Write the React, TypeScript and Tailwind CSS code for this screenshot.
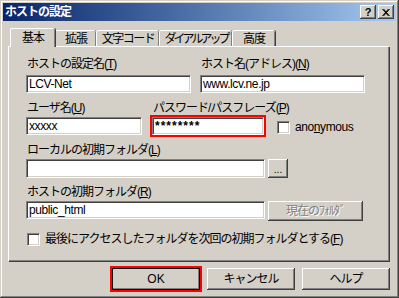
import { useState } from 'react';

const raised =
  'bg-[#d4d0c8] shadow-[inset_-1px_-1px_0_#404040,inset_1px_1px_0_#ffffff,inset_-2px_-2px_0_#808080,inset_2px_2px_0_#d4d0c8]';
const sunken =
  'bg-white border border-t-[#808080] border-l-[#808080] border-b-white border-r-white shadow-[inset_1px_1px_0_#404040,inset_-1px_-1px_0_#d4d0c8]';

function Label({ text, k }: { text: string; k: string }) {
  return (
    <div className="h-[14px] leading-[14px] pl-px whitespace-nowrap text-black">
      {text}(<u>{k}</u>)
    </div>
  );
}

function Field({ value, className, tr = 'tracking-[-0.4px]' }: { value: string; className: string; tr?: string }) {
  return (
    <div className={`${sunken} ${className} ${tr} flex items-center pl-[2px] overflow-hidden whitespace-nowrap`}>
      {value}
    </div>
  );
}

function Check({ checked }: { checked: boolean }) {
  return (
    <div className={`${sunken} w-[13px] h-[13px] shrink-0 flex items-center justify-center`}>
      {checked && (
        <svg width="7" height="7" viewBox="0 0 7 7">
          <path d="M0 2 L2 4 L6 0 M0 3 L2 5 L6 1 M0 4 L2 6 L6 2" stroke="#000" fill="none" />
        </svg>
      )}
    </div>
  );
}

const tabs = [
  { name: '基本', w: 'w-[45px]', tr: 'tracking-[-1px]' },
  { name: '拡張', w: 'w-[41px]', tr: 'tracking-[-1px]' },
  { name: '文字コード', w: 'w-[63px]', tr: 'tracking-[-1.5px]' },
  { name: 'ダイアルアップ', w: 'w-[73px]', tr: 'tracking-[-3px]' },
  { name: '高度', w: 'w-[43px]', tr: 'tracking-[-1px]' },
];

export default function App() {
  const [tab, setTab] = useState(0);
  const [anon, setAnon] = useState(false);
  const [last, setLast] = useState(false);

  return (
    <div className="w-[399px] h-[298px] bg-[#d4d0c8] p-[3px] overflow-hidden text-[12px] tracking-[-1px] text-black font-['Liberation_Sans','Noto_Sans_CJK_JP',sans-serif] shadow-[inset_-1px_-1px_0_#404040,inset_1px_1px_0_#d4d0c8,inset_-2px_-2px_0_#808080,inset_2px_2px_0_#ffffff]">
      {/* title bar */}
      <div className="h-[18px] flex items-center justify-between pl-[2px] pr-[2px] bg-gradient-to-r from-[#0a246a] to-[#a6caf0]">
        <span className="text-white font-bold text-[12px] leading-[14px]">ホストの設定</span>
        <div className="flex items-center">
          <div className={`${raised} w-[16px] h-[14px] flex items-center justify-center text-[11px] font-bold leading-none tracking-normal`}>?</div>
          <div className={`${raised} w-[16px] h-[14px] ml-[2px] flex items-center justify-center`}>
            <svg width="8" height="7" viewBox="0 0 8 7">
              <path d="M0.5 0 L6.5 7 M1.5 0 L7.5 7 M6.5 0 L0.5 7 M7.5 0 L1.5 7" stroke="#000" strokeWidth="1" />
            </svg>
          </div>
        </div>
      </div>

      {/* tabs */}
      <div className="flex items-end h-[18px] mt-[7px] pl-[7px]">
        {tabs.map((t, i) => (
          <button
            key={t.name}
            onClick={() => setTab(i)}
            className={`${t.w} ${t.tr} ${
              i === tab ? 'h-[19px] -mb-px relative z-10' : 'h-[16px]'
            } bg-[#d4d0c8] rounded-t-[2px] border-t border-l border-t-white border-l-white shadow-[inset_-1px_0_0_#808080,1px_0_0_#404040] flex items-center justify-center leading-[14px] whitespace-nowrap`}
          >
            {t.name}
          </button>
        ))}
      </div>

      {/* panel */}
      <div className="ml-[5px] w-[381px] h-[215px] border-t border-l border-t-white border-l-white shadow-[inset_-1px_-1px_0_#808080,1px_1px_0_#404040] pl-[17px] pt-[10px]">
        {/* row 1 */}
        <div className="flex gap-[9px]">
          <div className="w-[165px]">
            <Label text="ホストの設定名" k="T" />
            <Field value="LCV-Net" className="mt-[4px] w-[165px] h-[18px]" />
          </div>
          <div className="w-[165px]">
            <Label text="ホスト名(アドレス)" k="N" />
            <Field value="www.lcv.ne.jp" className="mt-[4px] w-[165px] h-[18px]" />
          </div>
        </div>

        {/* row 2 */}
        <div className="flex items-start mt-[8px]">
          <div className="w-[116px]">
            <Label text="ユーザ名" k="U" />
            <Field value="xxxxx" className="mt-[2px] w-[116px] h-[18px]" />
          </div>
          <div className="ml-[8px] w-[116px]">
            <div className="pl-[2px]">
              <Label text="パスワード/パスフレーズ" k="P" />
            </div>
            <div className="border-2 border-[#ff0000] w-[116px] h-[22px]">
              <Field value="********" className="w-[112px] h-[18px] font-bold" tr="tracking-[1px]" />
            </div>
          </div>
          <div className="ml-[11px] mt-[20px] flex items-center" onClick={() => setAnon(!anon)}>
            <Check checked={anon} />
            <span className="ml-[5px] leading-[13px] tracking-[-0.4px]">
              ano<u>n</u>ymous
            </span>
          </div>
        </div>

        {/* row 3 */}
        <div className="mt-[6px]">
          <Label text="ローカルの初期フォルダ" k="L" />
          <div className="flex items-start mt-[2px] gap-[3px]">
            <Field value="" className="w-[239px] h-[19px]" />
            <div className={`${raised} w-[20px] h-[19px] flex items-end justify-center pb-[3px] text-[10px] leading-none tracking-normal`}>...</div>
          </div>
        </div>

        {/* row 4 */}
        <div className="mt-[7px]">
          <Label text="ホストの初期フォルダ" k="R" />
          <div className="flex items-start mt-[2px] gap-[3px]">
            <Field value="public_html" className="w-[239px] h-[18px]" />
            <div className={`${raised} w-[95px] h-[20px] flex items-center justify-center text-[#808080] [text-shadow:1px_1px_0_#ffffff] whitespace-nowrap`}>
              現在のﾌｫﾙﾀﾞ
            </div>
          </div>
        </div>

        {/* row 5 */}
        <div className="flex items-center mt-[12px] ml-px" onClick={() => setLast(!last)}>
          <Check checked={last} />
          <span className="ml-[5px] leading-[13px] whitespace-nowrap">
            最後にアクセスしたフォルダを次回の初期フォルダとする(<u>F</u>)
          </span>
        </div>
      </div>

      {/* buttons */}
      <div className="flex items-start mt-[5px] pl-[107px]">
        <div className="border-2 border-[#ff0000] w-[92px] h-[26px]">
          <button className={`${raised} w-[88px] h-[22px] outline outline-1 outline-black -outline-offset-1 flex items-center justify-center tracking-normal`}>
            OK
          </button>
        </div>
        <button className={`${raised} ml-[5px] mt-[2px] w-[88px] h-[22px] flex items-center justify-center`}>キャンセル</button>
        <button className={`${raised} ml-[7px] mt-[2px] w-[88px] h-[22px] flex items-center justify-center`}>ヘルプ</button>
      </div>
    </div>
  );
}
